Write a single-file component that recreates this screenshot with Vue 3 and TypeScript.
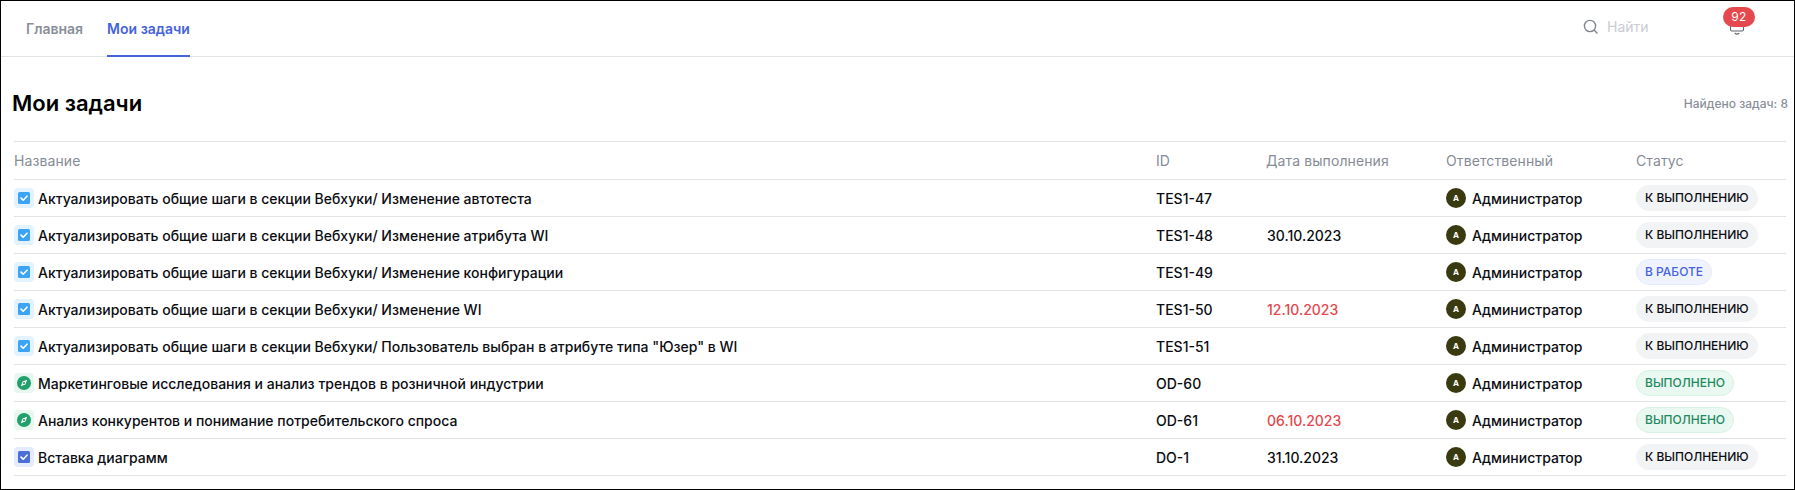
<template>
  <div class="page">
    <header class="topbar">
      <nav class="tabs">
        <a class="tab">Главная</a>
        <a class="tab tab--active">Мои задачи</a>
      </nav>
      <div class="search">
        <svg class="search-icon" width="16" height="16" viewBox="0 0 16 16" fill="none">
          <circle cx="7" cy="7" r="5.6" stroke="#7f858e" stroke-width="1.4" />
          <path d="M11.2 11.2L14 14" stroke="#7f858e" stroke-width="1.4" stroke-linecap="round" />
        </svg>
        <span class="search-text">Найти</span>
      </div>
      <div class="bell">
        <svg width="16" height="20" viewBox="0 0 16 20" fill="none">
          <path d="M1.5 13.5q0 1.5 1.5 1.5h10q1.5 0 1.5-1.5V7a6.5 6.5 0 0 0-13 0z" stroke="#5f6570" stroke-width="1.1" stroke-linejoin="round" />
          <path d="M6 17.3c1 .8 3 .8 4 0" stroke="#5f6570" stroke-width="1.1" stroke-linecap="round" />
        </svg>
        <span class="badge">92</span>
      </div>
    </header>

    <main class="content">
      <div class="heading">
        <h1>Мои задачи</h1>
        <span class="found">Найдено задач: 8</span>
      </div>

      <div class="table">
        <div class="row row--head">
          <span>Название</span>
          <span>ID</span>
          <span>Дата выполнения</span>
          <span>Ответственный</span>
          <span>Статус</span>
        </div>
        <div v-for="task in tasks" :key="task.id" class="row">
          <div class="name">
            <span :class="['type', `type--${task.type}`]">
              <svg v-if="task.type === 'goal'" width="14" height="14" viewBox="0 0 14 14">
                <circle cx="7" cy="7" r="7" fill="#22a06b" />
                <path d="M10.2 3.8L8.4 8.4 3.8 10.2 5.6 5.6z" fill="#fff" />
                <circle cx="7" cy="7" r="1.1" fill="#22a06b" />
              </svg>
              <svg v-else width="12" height="12" viewBox="0 0 12 12">
                <rect width="12" height="12" rx="1.5" :fill="task.type === 'task' ? '#3ba4f5' : '#4a6fd8'" />
                <path d="M3 6.1l2.2 2.1L9 4.2" fill="none" stroke="#fff" stroke-width="1.6" stroke-linecap="round" stroke-linejoin="round" />
              </svg>
            </span>
            <span>{{ task.title }}</span>
          </div>
          <span>{{ task.id }}</span>
          <span :class="['date', { overdue: task.overdue }]">{{ task.date }}</span>
          <div class="owner">
            <span class="avatar">A</span>
            <span>Администратор</span>
          </div>
          <div>
            <span :class="['pill', `pill--${task.status}`]">{{ statusLabels[task.status] }}</span>
          </div>
        </div>
      </div>
    </main>
  </div>
</template>

<script setup lang="ts">
type Status = "todo" | "progress" | "done";

interface Task {
  id: string;
  title: string;
  type: "task" | "goal" | "diagram";
  date: string;
  overdue?: boolean;
  status: Status;
}

const statusLabels: Record<Status, string> = {
  todo: "К ВЫПОЛНЕНИЮ",
  progress: "В РАБОТЕ",
  done: "ВЫПОЛНЕНО",
};

const prefix = "Актуализировать общие шаги в секции Вебхуки/ ";

const tasks: Task[] = [
  { id: "TES1-47", title: prefix + "Изменение автотеста", type: "task", date: "", status: "todo" },
  { id: "TES1-48", title: prefix + "Изменение атрибута WI", type: "task", date: "30.10.2023", status: "todo" },
  { id: "TES1-49", title: prefix + "Изменение конфигурации", type: "task", date: "", status: "progress" },
  { id: "TES1-50", title: prefix + "Изменение WI", type: "task", date: "12.10.2023", overdue: true, status: "todo" },
  { id: "TES1-51", title: prefix + 'Пользователь выбран в атрибуте типа "Юзер" в WI', type: "task", date: "", status: "todo" },
  { id: "OD-60", title: "Маркетинговые исследования и анализ трендов в розничной индустрии", type: "goal", date: "", status: "done" },
  { id: "OD-61", title: "Анализ конкурентов и понимание потребительского спроса", type: "goal", date: "06.10.2023", overdue: true, status: "done" },
  { id: "DO-1", title: "Вставка диаграмм", type: "diagram", date: "31.10.2023", status: "todo" },
];
</script>

<style>
html,
body {
  margin: 0;
  background: #fff;
}
</style>

<style scoped>
.page {
  box-sizing: border-box;
  width: 1795px;
  height: 490px;
  border: 1px solid #000;
  overflow: hidden;
  font-family: Inter, "Liberation Sans", sans-serif;
  color: #0b0d12;
  background: #fff;
}

.topbar {
  display: flex;
  align-items: stretch;
  height: 56px;
  border-bottom: 1px solid #e1e3e6;
  box-sizing: border-box;
  padding-left: 25px;
}

.tabs {
  display: flex;
  gap: 24px;
  flex: 1;
}

.tab {
  display: flex;
  align-items: center;
  height: 56px;
  box-sizing: border-box;
  padding-bottom: 2px;
  font-size: 14px;
  font-weight: 600;
  color: #8a9099;
}

.tab--active {
  color: #4763dc;
  border-bottom: 2px solid #4763dc;
  padding-bottom: 0;
}

.search {
  display: flex;
  align-items: center;
  gap: 8px;
  width: 140px;
  padding-bottom: 4px;
}

.search-text {
  font-size: 14px;
  color: #c9ccd1;
}

.bell {
  position: relative;
  width: 71px;
}

.bell svg {
  position: absolute;
  left: 6px;
  top: 15px;
}

.badge {
  position: absolute;
  left: 0;
  top: 6px;
  width: 32px;
  height: 20px;
  border-radius: 10px;
  background: #e5484d;
  color: #fff;
  font-size: 12px;
  line-height: 20px;
  text-align: center;
  letter-spacing: 0.4px;
}

.content {
  padding: 0 8px 0 13px;
}

.heading {
  display: flex;
  align-items: center;
  justify-content: space-between;
  box-sizing: border-box;
  height: 84px;
  padding-top: 8px;
  margin: 0 -2px 0 -2px;
}

.heading h1 {
  margin: 0;
  font-size: 22px;
  font-weight: 600;
  color: #000;
}

.found {
  font-size: 12px;
  font-weight: 500;
  color: #8a9099;
}

.table {
  border-top: 1px solid #e1e3e6;
}

.row {
  display: grid;
  grid-template-columns: 1142px 110px 180px 190px 1fr;
  align-items: center;
  height: 37px;
  box-sizing: border-box;
  border-bottom: 1px solid #e1e3e6;
  font-size: 14px;
  font-weight: 500;
}

.row--head {
  height: 38px;
  font-weight: 400;
  letter-spacing: 0.1px;
  color: #868c95;
}

.date {
  padding-left: 1px;
}

.name,
.owner {
  display: flex;
  align-items: center;
}

.name {
  gap: 4px;
}

.owner {
  gap: 6px;
}

.type {
  display: flex;
  align-items: center;
  justify-content: center;
  width: 20px;
  height: 20px;
  border-radius: 4px;
}

.type--task {
  background: #e3f2ff;
}

.type--goal {
  background: #e8f8f1;
}

.type--diagram {
  background: #e4ebfc;
}

.overdue {
  color: #e5484d;
}

.avatar {
  display: flex;
  align-items: center;
  justify-content: center;
  width: 20px;
  height: 20px;
  border-radius: 50%;
  background: #3a3a10;
  color: #fff;
  font-size: 8px;
  font-weight: 700;
}

.pill {
  display: inline-block;
  box-sizing: border-box;
  height: 26px;
  padding: 0 8px;
  border: 1px solid #f2f3f5;
  border-radius: 13px;
  background: #f2f3f5;
  font-size: 12px;
  line-height: 24px;
  font-weight: 500;
  vertical-align: middle;
}

.pill--progress {
  background: #eff3fe;
  border-color: #e6ecfc;
  color: #4763dc;
}

.pill--done {
  background: #e9f8f0;
  border-color: #d8f2e4;
  color: #1f8a5f;
}
</style>
